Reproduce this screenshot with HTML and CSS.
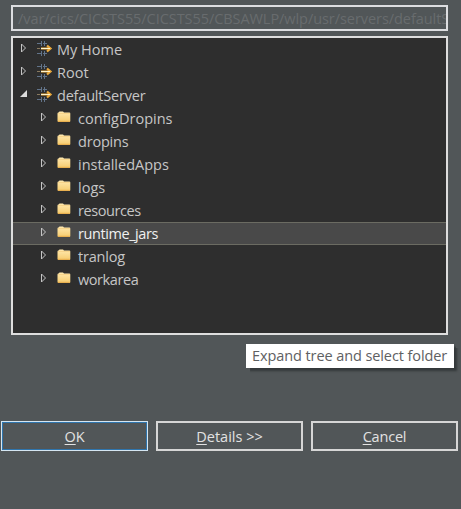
FILE: index.html
```
<!DOCTYPE html>
<html lang="en">
<head>
<meta charset="utf-8">
<title>Select folder</title>
<link rel="stylesheet" href="styles.css">
</head>
<body>
<svg class="defs" width="0" height="0">
  <defs>
    <linearGradient id="fold" x1="0" y1="0" x2="0" y2="1"><stop offset="0" stop-color="#ffe9b0"/><stop offset="1" stop-color="#f6cb6d"/></linearGradient>
    <symbol id="closed" viewBox="0 0 8 10"><path d="M1.500 1V9L5.500 5Z" fill="none" stroke="#c4c4c4"/></symbol>
    <symbol id="open" viewBox="0 0 8 10"><path d="M7 1V8H0Z" fill="#dcdcdc"/></symbol>
    <symbol id="site" viewBox="0 0 16 16">
      <path d="M0 3.500H4M6 3.500H10M0 13.500H4M6 13.500H10M4.500 1V6M7.500 1V6M4.500 11V16M7.500 11V16" fill="none" stroke="#62748a"/>
      <path d="M0 8.500H3" stroke="#8a7a60"/>
      <path d="M4 8.500H13M10 5.500L13.500 8.500L10 11.500" fill="none" stroke="#e9a83b" stroke-width="2.200"/>
      <path d="M4 8.500H13" stroke="#fff3c8" stroke-width="1"/>
    </symbol>
    <symbol id="folder" viewBox="0 0 14 12"><path d="M.5 2.500Q.5 1.500 1.500 1.500L2.500 .5H6L7 1.500H12.300Q13.300 1.500 13.300 2.500V10Q13.300 11 12.300 11H1.700Q.5 11 .5 10Z" fill="url(#fold)"/><path d="M1 10.400H12.800" stroke="#e8b050" stroke-width="1.200"/><path d="M1.200 2.500H12.800" stroke="#f4c978" stroke-width=".6"/></symbol>
  </defs>
</svg>
<main class="dialog">
  <div class="path"><span>/var/cics/CICSTS55/CICSTS55/CBSAWLP/wlp/usr/servers/defaultS</span></div>
  <div class="tree">
    <div class="row"><svg class="arrow"><use href="#closed"/></svg><svg class="site"><use href="#site"/></svg><span class="loose">My Home</span></div>
    <div class="row"><svg class="arrow"><use href="#closed"/></svg><svg class="site"><use href="#site"/></svg><span class="loose">Root</span></div>
    <div class="row"><svg class="arrow"><use href="#open"/></svg><svg class="site"><use href="#site"/></svg><span>defaultServer</span></div>
    <div class="row child"><svg class="arrow"><use href="#closed"/></svg><svg class="folder"><use href="#folder"/></svg><span class="loose">configDropins</span></div>
    <div class="row child"><svg class="arrow"><use href="#closed"/></svg><svg class="folder"><use href="#folder"/></svg><span>dropins</span></div>
    <div class="row child"><svg class="arrow"><use href="#closed"/></svg><svg class="folder"><use href="#folder"/></svg><span class="loose">installedApps</span></div>
    <div class="row child"><svg class="arrow"><use href="#closed"/></svg><svg class="folder"><use href="#folder"/></svg><span class="loose">logs</span></div>
    <div class="row child"><svg class="arrow"><use href="#closed"/></svg><svg class="folder"><use href="#folder"/></svg><span class="tight">resources</span></div>
    <div class="row child selected"><svg class="arrow"><use href="#closed"/></svg><svg class="folder"><use href="#folder"/></svg><span class="tight">runtime_jars</span></div>
    <div class="row child"><svg class="arrow"><use href="#closed"/></svg><svg class="folder"><use href="#folder"/></svg><span>tranlog</span></div>
    <div class="row child"><svg class="arrow"><use href="#closed"/></svg><svg class="folder"><use href="#folder"/></svg><span class="tight">workarea</span></div>
  </div>
  <div class="buttons">
    <button class="btn primary"><span><u>O</u>K</span></button>
    <button class="btn"><span class="loose"><u>D</u>etails &gt;&gt;</span></button>
    <button class="btn"><span><u>C</u>ancel</span></button>
  </div>
  <div class="tooltip">Expand tree and select folder</div>
</main>
</body>
</html>
```
FILE: styles.css
```
* { box-sizing: border-box; }
body {
  margin: 0;
  height: 509px;
  overflow: hidden;
  background: #515658;
  font: 14.5px/20px "Open Sans", "Noto Sans", sans-serif;
  letter-spacing: -0.2px;
}
.defs { position: absolute; }
.loose { letter-spacing: 0; }
.tight { letter-spacing: -0.42px; }
.dialog { position: relative; height: 509px; padding-top: 5px; }
.path {
  width: 437px;
  height: 26px;
  margin-left: 11px;
  padding: 2px 0 0 5px;
  border: 2px solid #dcdde0;
  color: #686c6e;
  letter-spacing: -0.06px;
  overflow: hidden;
  white-space: nowrap;
}
.tree {
  width: 437px;
  height: 299px;
  margin: 5px 0 0 11px;
  border: 2px solid #dedede;
  background: #2e2e2e;
  color: #c6c6c6;
}
.row {
  display: flex;
  align-items: center;
  height: 23px;
  padding-left: 7px;
  white-space: nowrap;
}
.child { padding-left: 27px; }
.selected {
  background: #494949;
  color: #f0f0f0;
  box-shadow: inset 0 1px #6b6b62, inset 0 -1px #6b6b62;
}
.arrow { width: 8px; height: 10px; margin-top: -3px; }
.site { width: 16px; height: 16px; margin: -3px 4px 0 9px; }
.folder { width: 14px; height: 12px; margin: -3px 7px 0 9px; }
.buttons { display: flex; gap: 8px; margin: 86px 0 0 1px; }
.btn {
  width: 147px;
  height: 30px;
  padding: 1px 0 0;
  border: 2px solid #d6d6d6;
  background: #515658;
  color: #e2e2e2;
  font: inherit;
  letter-spacing: inherit;
}
.primary { border: 1px solid #d5e6f2; box-shadow: inset 0 0 0 1px #2f75ad; }
.btn u { text-underline-offset: 2px; }
.tooltip {
  position: absolute;
  left: 246px;
  top: 344px;
  width: 208px;
  height: 24px;
  padding: 2px 0 0 6px;
  background: #fff;
  color: #5e6062;
  letter-spacing: -0.09px;
  box-shadow: 3px 3px 2px #34383a;
  clip-path: polygon(0 0, 210px 0, 210px 4px, 214px 4px, 214px 30px, 4px 30px, 4px 24px, 0 24px);
  white-space: nowrap;
}
```
